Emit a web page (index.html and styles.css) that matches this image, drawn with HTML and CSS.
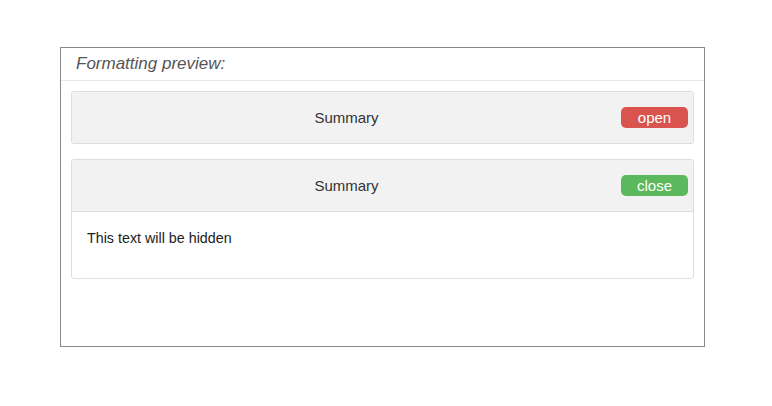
FILE: index.html
```html
<!DOCTYPE html>
<html>
<head>
<meta charset="utf-8">
<link rel="stylesheet" href="styles.css">
</head>
<body>
<div class="preview">
  <div class="preview-title">Formatting preview:</div>
  <div class="preview-content">
    <div class="panel">
      <div class="panel-heading">
        <span class="summary">Summary</span>
        <span class="btn btn-open">open</span>
      </div>
    </div>
    <div class="panel">
      <div class="panel-heading bordered">
        <span class="summary">Summary</span>
        <span class="btn btn-close">close</span>
      </div>
      <div class="panel-body">This text will be hidden</div>
    </div>
  </div>
</div>
</body>
</html>
```
FILE: styles.css
```css
html, body {
  margin: 0;
  padding: 0;
  background: #fff;
  font-family: "Liberation Sans", Arial, sans-serif;
  color: #333;
}
.preview {
  box-sizing: border-box;
  margin: 47px 0 0 60px;
  width: 645px;
  height: 300px;
  border: 1px solid #888;
}
.preview-title {
  box-sizing: border-box;
  height: 33px;
  padding: 0 15px;
  border-bottom: 1px solid #e8e8e8;
  font-style: italic;
  font-size: 17px;
  line-height: 31px;
  color: #555;
}
.preview-content {
  padding: 10px;
}
.panel {
  border: 1px solid #ddd;
  border-radius: 3px;
  margin-bottom: 15px;
  overflow: hidden;
}
.panel-heading {
  box-sizing: border-box;
  height: 51px;
  display: flex;
  align-items: center;
  padding-right: 5px;
  background: #f2f2f2;
  font-size: 15px;
}
.panel-heading.bordered {
  height: 52px;
  border-bottom: 1px solid #ddd;
}
.summary {
  flex: 1;
  text-align: center;
  color: #333;
}
.btn {
  width: 67px;
  height: 21px;
  line-height: 21px;
  border-radius: 5px;
  text-align: center;
  color: #fff;
  font-size: 15px;
}
.btn-open { background: #d9534f; }
.btn-close { background: #5cb85c; }
.panel-body {
  box-sizing: border-box;
  height: 66px;
  padding: 16px 15px;
  font-size: 14.3px;
  line-height: 20px;
  color: #222;
}
```
